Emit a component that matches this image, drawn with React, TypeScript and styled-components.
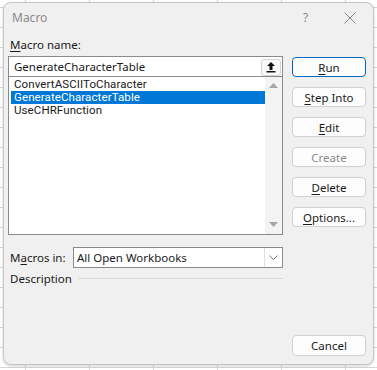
import * as React from 'react';
import styled, { createGlobalStyle } from 'styled-components';

const GlobalStyle = createGlobalStyle`
  html, body {
    margin: 0;
    padding: 0;
    width: 377px;
    height: 370px;
    overflow: hidden;
    background-color: #ffffff;
    background-image:
      linear-gradient(to right, #d6d6d6 1px, transparent 1px),
      linear-gradient(to bottom, #d6d6d6 1px, transparent 1px);
    background-size: 64px 20px;
    background-position: 25px 7px;
    font-family: "Noto Sans", "Open Sans", sans-serif;
    font-size: 11.5px;
    color: #1a1a1a;
  }
`;

const Dialog = styled.div`
  box-sizing: border-box;
  margin: 2px 0 0 3px;
  width: 371px;
  height: 363px;
  display: flex;
  flex-direction: column;
  background: #f0f0f0;
  border: 1px solid #c6c6c6;
  border-radius: 8px;
  box-shadow: 0 1px 3px rgba(0, 0, 0, 0.18);
`;

const TitleBar = styled.div`
  box-sizing: border-box;
  height: 31px;
  display: flex;
  align-items: center;
  padding: 0 0 2px 8px;
  flex-shrink: 0;
`;

const Title = styled.span`
  flex: 1;
  color: #8a8a8a;
  font-size: 12px;
`;

const Help = styled.span`
  width: 35px;
  color: #8a8a8a;
  font-size: 12px;
`;

const Close = styled.span`
  width: 24px;
  margin-right: 11px;
  display: flex;
  justify-content: center;
`;

const Content = styled.div`
  flex: 1;
  display: flex;
  gap: 9px;
  padding: 0 5px 8px 4px;
`;

const LeftColumn = styled.div`
  width: 275px;
  display: flex;
  flex-direction: column;
`;

const Label = styled.div`
  height: 15px;
  line-height: 15px;
  padding-left: 2px;
  margin: 3px 0 4px;
`;

const Key = styled.span`
  text-decoration: underline;
  text-underline-offset: 2px;
`;

const NameInput = styled.div`
  box-sizing: border-box;
  height: 20px;
  display: flex;
  align-items: center;
  background: #fff;
  border: 1px solid #8a8a8a;
  border-bottom: none;
  padding: 0 1px 0 5px;
`;

const InputText = styled.span`
  flex: 1;
`;

const UploadButton = styled.div`
  box-sizing: border-box;
  width: 20px;
  height: 17px;
  margin-top: 1px;
  display: flex;
  align-items: center;
  justify-content: center;
  background: #fbfbfb;
  border: 1px solid #d4d4d4;
  border-radius: 3px;
`;

const ListBox = styled.div`
  box-sizing: border-box;
  height: 159px;
  display: flex;
  background: #fff;
  border: 1px solid #8a8a8a;
`;

const Items = styled.ul`
  flex: 1;
  list-style: none;
  margin: 0;
  padding: 1px 0 0 2px;
`;

const Item = styled.li<{ $selected?: boolean }>`
  height: 13px;
  line-height: 13px;
  padding-left: 3px;
  font-family: Roboto, "Noto Sans", sans-serif;
  font-size: 11.5px;
  letter-spacing: 0.1px;
  background: ${({ $selected }) => ($selected ? '#0078d7' : 'transparent')};
  color: ${({ $selected }) => ($selected ? '#ffffff' : '#1a1a1a')};
`;

const ScrollBar = styled.div`
  width: 17px;
  display: flex;
  flex-direction: column;
  justify-content: space-between;
  align-items: center;
  padding: 6px 0 7px;
  background: #f3f3f3;
`;

const SelectRow = styled.div`
  display: flex;
  align-items: center;
  margin-top: 12px;
`;

const RowLabel = styled.span`
  width: 63px;
  padding-left: 2px;
`;

const Select = styled.div`
  box-sizing: border-box;
  flex: 1;
  height: 21px;
  display: flex;
  align-items: center;
  background: #fff;
  border: 1px solid #8a8a8a;
`;

const SelectText = styled.span`
  flex: 1;
  padding-left: 3px;
`;

const SelectArrow = styled.span`
  width: 17px;
  height: 19px;
  display: flex;
  align-items: center;
  justify-content: center;
  border-left: 1px solid #e0e0e0;
`;

const DescriptionRow = styled.div`
  display: flex;
  align-items: center;
  gap: 6px;
  margin-top: 3px;
  padding-left: 2px;
`;

const Rule = styled.div`
  flex: 1;
  height: 1px;
  background: #dadada;
`;

const RightColumn = styled.div`
  width: 74px;
  display: flex;
  flex-direction: column;
  gap: 10px;
  padding-top: 23px;
`;

const Button = styled.div<{ $primary?: boolean; $disabled?: boolean }>`
  box-sizing: border-box;
  height: 20px;
  display: flex;
  align-items: center;
  justify-content: center;
  background: #fdfdfd;
  border: 1px solid ${({ $primary }) => ($primary ? '#0067c0' : '#d0d0d0')};
  box-shadow: ${({ $primary }) => ($primary ? 'inset 0 0 0 1px #ffffff' : 'none')};
  border-radius: 4px;
  color: ${({ $disabled }) => ($disabled ? '#8a8a8a' : '#1a1a1a')};
`;

const CancelButton = styled(Button)`
  margin-top: auto;
  height: 21px;
`;

const macros = ['ConvertASCIIToCharacter', 'GenerateCharacterTable', 'UseCHRFunction'];

const CloseIcon = () => (
  <svg width="12" height="12" viewBox="0 0 12 12">
    <path d="M0.5 0.5L11.5 11.5M11.5 0.5L0.5 11.5" stroke="#8a8a8a" strokeWidth="1" />
  </svg>
);

const UploadIcon = () => (
  <svg width="10" height="12" viewBox="0 0 10 12">
    <path d="M5 1L1 5H3.5V9H6.5V5H9Z" fill="#111" />
    <rect x="0.5" y="10" width="9" height="1.5" fill="#111" />
  </svg>
);

const Triangle = ({ up }: { up?: boolean }) => (
  <svg width="9" height="5" viewBox="0 0 9 5">
    <path d={up ? 'M4.5 0L9 5H0Z' : 'M0 0H9L4.5 5Z'} fill="#a6a6a6" />
  </svg>
);

const Chevron = () => (
  <svg width="9" height="5" viewBox="0 0 9 5">
    <path d="M0.5 0.5L4.5 4.5L8.5 0.5" stroke="#7a7a7a" fill="none" strokeWidth="1" />
  </svg>
);

const App = () => (
  <>
    <GlobalStyle />
    <Dialog>
      <TitleBar>
        <Title>Macro</Title>
        <Help>?</Help>
        <Close>
          <CloseIcon />
        </Close>
      </TitleBar>
      <Content>
        <LeftColumn>
          <Label>
            <Key>M</Key>acro name:
          </Label>
          <NameInput>
            <InputText>GenerateCharacterTable</InputText>
            <UploadButton>
              <UploadIcon />
            </UploadButton>
          </NameInput>
          <ListBox>
            <Items>
              {macros.map((name) => (
                <Item key={name} $selected={name === 'GenerateCharacterTable'}>
                  {name}
                </Item>
              ))}
            </Items>
            <ScrollBar>
              <Triangle up />
              <Triangle />
            </ScrollBar>
          </ListBox>
          <SelectRow>
            <RowLabel>
              M<Key>a</Key>cros in:
            </RowLabel>
            <Select>
              <SelectText>All Open Workbooks</SelectText>
              <SelectArrow>
                <Chevron />
              </SelectArrow>
            </Select>
          </SelectRow>
          <DescriptionRow>
            Description
            <Rule />
          </DescriptionRow>
        </LeftColumn>
        <RightColumn>
          <Button $primary>
            <span>
              <Key>R</Key>un
            </span>
          </Button>
          <Button>
            <span>
              <Key>S</Key>tep Into
            </span>
          </Button>
          <Button>
            <span>
              <Key>E</Key>dit
            </span>
          </Button>
          <Button $disabled>Create</Button>
          <Button>
            <span>
              <Key>D</Key>elete
            </span>
          </Button>
          <Button>
            <span>
              <Key>O</Key>ptions...
            </span>
          </Button>
          <CancelButton>Cancel</CancelButton>
        </RightColumn>
      </Content>
    </Dialog>
  </>
);

export default App;
